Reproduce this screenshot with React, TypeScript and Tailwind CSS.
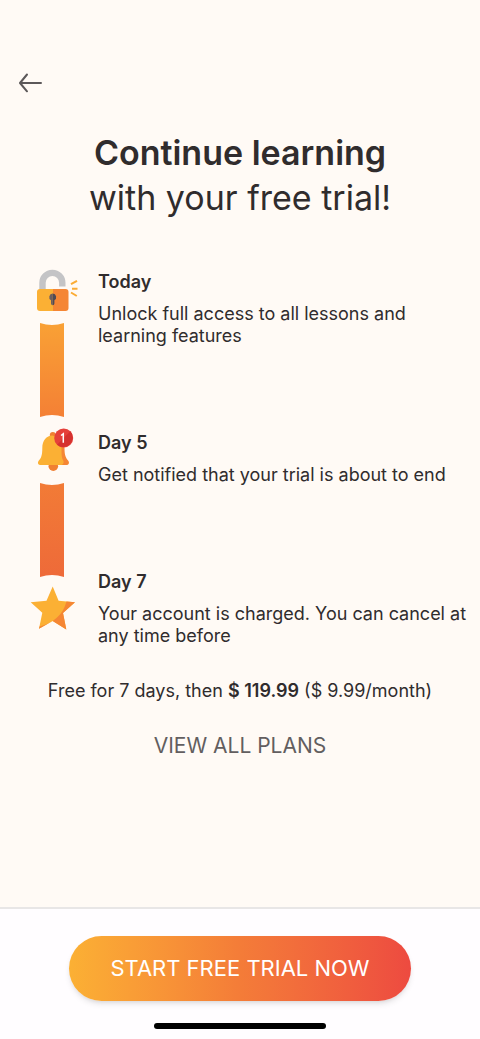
import React from 'react'

const steps = [
  {
    title: 'Today',
    text: 'Unlock full access to all lessons and learning features',
  },
  {
    title: 'Day 5',
    text: 'Get notified that your trial is about to end',
  },
  {
    title: 'Day 7',
    text: 'Your account is charged. You can cancel at any time before',
  },
]

function LockIcon() {
  return (
    <svg width="50" height="46" viewBox="0 0 50 46" fill="none">
      <path d="M12.5 22V14.8a9.9 9.9 0 0 1 19.8 0V18.5" stroke="#c4c4c6" strokeWidth="6.4" />
      <path d="M10 21h13v22H10a3 3 0 0 1-3-3V24a3 3 0 0 1 3-3z" fill="#fbb034" />
      <path d="M23 21h12.500a3 3 0 0 1 3 3v16a3 3 0 0 1-3 3H23z" fill="#f58634" />
      <path d="M22.700 25.500a3.600 3.600 0 0 0-1.700 6.700V35.500a1.700 1.700 0 0 0 1.700 1.700z" fill="#6b5d60" />
      <path d="M22.700 25.500a3.600 3.600 0 0 1 1.700 6.700V35.500a1.700 1.700 0 0 1-1.700 1.700z" fill="#4d4a55" />
      <path d="M41 16.200L47 12.800M42 20.700H47.500M41 24.500L46.800 28" stroke="#fbab33" strokeWidth="2" />
    </svg>
  )
}

function BellIcon() {
  return (
    <svg width="50" height="48" viewBox="0 0 50 48" fill="none">
      <circle cx="22.800" cy="9" r="3" fill="#f07f32" />
      <circle cx="23.300" cy="40.200" r="4.800" fill="#f07f32" />
      <path
        d="M22.800 9.500C30 9.500 34.500 15 34.500 22C34.500 30 36 32 38.300 34.700C39.600 36.400 39 39 36.500 39H20z"
        fill="#f58634"
      />
      <path
        d="M22.300 9.500C28.500 11 31.500 16 31.500 22C31.500 29 31.500 31 33.300 34.700C34.200 37 33 39 30.500 39H10C8 39 7.300 36.500 8.700 34.800C11 32 12.300 30 12.300 22C12.300 14.500 16.500 9.500 22.300 9.500z"
        fill="#fbb034"
      />
      <circle cx="33.700" cy="12" r="9.500" fill="#e5403a" />
      <path d="M40.400 5.300a9.500 9.500 0 0 1-13.400 13.400z" fill="#d5312f" />
      <path d="M31 9.500L33.300 7.800V16.800" stroke="#fff" strokeWidth="1.500" />
    </svg>
  )
}

function StarIcon() {
  return (
    <svg width="50" height="46" viewBox="0 0 50 46" fill="none">
      <path
        d="M22.700 .5L28.600 14.700L45 16.200L33 27L36.300 43.500L22.700 35L9 42.800L12.300 26.800L.7 16.200L16.500 14.700z"
        fill="#fbb034"
      />
      <path d="M36.500 15.400L45 16.200L33 27L36.300 43.500L22.700 35L9 42.800L9.500 40.500C23 37 33 29 36.500 15.400z" fill="#f58634" />
    </svg>
  )
}

// strip between two icons, with both ends curved inwards
function Connector({ id, from, to }: { id: string; from: string; to: string }) {
  return (
    <svg width="24" height="94" viewBox="0 0 24 94" className="ml-[10px]">
      <defs>
        <linearGradient id={id} x1="0" y1="0" x2="0" y2="1">
          <stop offset="0" stopColor={from} />
          <stop offset="1" stopColor={to} />
        </linearGradient>
      </defs>
      <path d="M0 0Q12 4 24 0V94Q12 90 0 94z" fill={`url(#${id})`} />
    </svg>
  )
}

export default function App() {
  return (
    <div className="flex min-h-screen flex-col bg-[#fffaf5] font-['Inter',sans-serif] text-[#302c2d]">
      <header className="px-4 pt-[68px]">
        <button type="button" aria-label="Back" className="block h-[30px] w-[30px] text-[#5c5859]">
          <svg width="30" height="30" viewBox="0 0 30 30" fill="none" stroke="currentColor" strokeWidth="2" strokeLinecap="round" strokeLinejoin="round">
            <path d="M25 15H4M11 6.500L4 15L11 23.300" />
          </svg>
        </button>
      </header>

      <main className="flex-1">
        <h1 className="mt-8 text-center text-[34px] leading-[45px]">
          <span className="block font-semibold">Continue learning</span>
          <span className="block">with your free trial!</span>
        </h1>

        <section className="mt-12 flex gap-[18px] pr-2 pl-[30px]">
          <div className="flex shrink-0 flex-col gap-[9px]" aria-hidden="true">
            <LockIcon />
            <Connector id="strip-top" from="#f9a135" to="#f48035" />
            <BellIcon />
            <Connector id="strip-bottom" from="#f27b36" to="#ee6a39" />
            <StarIcon />
          </div>
          <ol className="flex flex-col gap-[85px] pt-[3px]">
            {steps.map((step) => (
              <li key={step.title}>
                <h2 className="text-[18px] leading-[22px] font-semibold">{step.title}</h2>
                <p className="mt-[10px] text-[18px] leading-[22px]">{step.text}</p>
              </li>
            ))}
          </ol>
        </section>

        <p className="mt-[33px] text-center text-[18px] leading-[22px]">
          Free for 7 days, then <strong className="font-semibold">$ 119.99</strong> ($ 9.99/month)
        </p>
        <div className="mt-8 text-center">
          <button type="button" className="text-[21px] leading-6 text-[#625e5f]">
            VIEW ALL PLANS
          </button>
        </div>
      </main>

      <footer className="flex flex-col items-center border-t-2 border-[#e8e6e6] bg-[#fffdff] px-[69px] pt-[27px] pb-[10px]">
        <button
          type="button"
          className="h-[65px] w-full rounded-full bg-gradient-to-r from-[#fbb034] via-[#f47c38] to-[#ed4a40] text-[22px] text-white shadow-md"
        >
          START FREE TRIAL NOW
        </button>
        <div className="mt-[22px] h-[6px] w-[172px] rounded-full bg-black" />
      </footer>
    </div>
  )
}
